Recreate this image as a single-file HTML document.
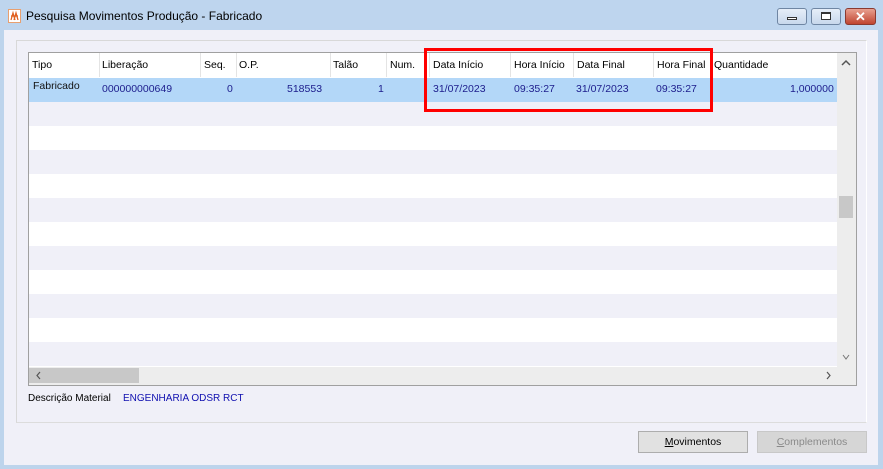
<!DOCTYPE html><html><head><style>
*{margin:0;padding:0;box-sizing:border-box}
body{width:883px;height:469px;overflow:hidden;background:#bdd4ec;font-family:"Liberation Sans",sans-serif;font-size:10.5px;position:relative}
.a{position:absolute}
.t{white-space:nowrap}
</style></head><body>
<div class="a" style="left:0;top:0;width:883px;height:30px;background:#bed5ee"></div>
<svg class="a" style="left:8px;top:9px" width="13" height="14"><rect x="0.5" y="0.5" width="12" height="13" fill="#fff" stroke="#e8a070"/><path d="M3 11 L5 4 L7 11 M6 11 L8 4 L10 11 M3 7h7" stroke="#e06020" stroke-width="1.3" fill="none"/></svg>
<div class="a t" style="left:26px;top:9px;font-size:12px;color:#000">Pesquisa Movimentos Produção - Fabricado</div>
<div class="a" style="left:777px;top:8px;width:30px;height:17px;border:1px solid #6f86a3;border-radius:3px;background:linear-gradient(#e6eef8,#c8d8ec)"></div>
<div class="a" style="left:787px;top:17px;width:10px;height:3px;border:1px solid #333;background:#fff"></div>
<div class="a" style="left:811px;top:8px;width:30px;height:17px;border:1px solid #6f86a3;border-radius:3px;background:linear-gradient(#e6eef8,#c8d8ec)"></div>
<div class="a" style="left:821px;top:12px;width:10px;height:8px;border:1px solid #333;border-top-width:2px;background:#fff"></div>
<div class="a" style="left:845px;top:8px;width:31px;height:17px;border:1px solid #8a3a30;border-radius:3px;background:linear-gradient(#e8a090,#c04530);color:#fff;font-weight:bold;font-size:13px;text-align:center;line-height:15px">✕</div>
<div class="a" style="left:4px;top:30px;width:874px;height:435px;background:#f0f0f8"></div>
<div class="a" style="left:16px;top:40px;width:851px;height:383px;border:1px solid #d8d8d8;border-right-color:#fff;border-bottom-color:#dcdcdc"></div>
<div class="a" style="left:28px;top:52px;width:829px;height:334px;border:1px solid #a0a0a0;background:#fff;overflow:hidden">
 <div class="a" style="left:0;top:1px;width:808px;height:24px;background:#fff"></div>
 <div class="a" style="left:0;top:25px;width:808px;height:24px;background:#b3d7f8"></div>
 <div class="a" style="left:0;top:49px;width:808px;height:24px;background:#f0f0f8"></div>
 <div class="a" style="left:0;top:97px;width:808px;height:24px;background:#f0f0f8"></div>
 <div class="a" style="left:0;top:145px;width:808px;height:24px;background:#f0f0f8"></div>
 <div class="a" style="left:0;top:193px;width:808px;height:24px;background:#f0f0f8"></div>
 <div class="a" style="left:0;top:241px;width:808px;height:24px;background:#f0f0f8"></div>
 <div class="a" style="left:0;top:289px;width:808px;height:24px;background:#f0f0f8"></div>
 <div class="a" style="left:808px;top:0;width:19px;height:314px;background:#ededed"></div>
 <svg class="a" style="left:812px;top:6px" width="10" height="8"><path d="M1 6 L5 2 L9 6" stroke="#555" stroke-width="1.5" fill="none"/></svg>
 <svg class="a" style="left:812px;top:300px" width="10" height="8"><path d="M2 2 L5 6 L8 2" stroke="#777" stroke-width="1" fill="none"/></svg>
 <div class="a" style="left:810px;top:143px;width:14px;height:22px;background:#c8c8c8"></div>
 <div class="a" style="left:0;top:314px;width:827px;height:18px;background:#ededed"></div>
 <div class="a" style="left:0;top:315px;width:110px;height:15px;background:#c8c8c8"></div>
 <svg class="a" style="left:7px;top:318px" width="6" height="9"><path d="M4 1 L1 4.5 L4 8" stroke="#555" stroke-width="1.2" fill="none"/></svg>
 <svg class="a" style="left:797px;top:318px" width="6" height="9"><path d="M1 1 L4 4.5 L1 8" stroke="#555" stroke-width="1.2" fill="none"/></svg>
</div>
<div class="a" style="left:28px;top:53px;width:808px;height:24px;color:#000">
 <span class="a t" style="left:4px;top:6px">Tipo</span>
 <span class="a t" style="left:74px;top:6px">Liberação</span>
 <span class="a t" style="left:176px;top:6px">Seq.</span>
 <span class="a t" style="left:211px;top:6px">O.P.</span>
 <span class="a t" style="left:305px;top:6px">Talão</span>
 <span class="a t" style="left:362px;top:6px">Num.</span>
 <span class="a t" style="left:405px;top:6px">Data Início</span>
 <span class="a t" style="left:486px;top:6px">Hora Início</span>
 <span class="a t" style="left:549px;top:6px">Data Final</span>
 <span class="a t" style="left:629px;top:6px">Hora Final</span>
 <span class="a t" style="left:686px;top:6px">Quantidade</span>
 <span class="a" style="left:71px;top:0;width:1px;height:24px;background:#e4e4e4"></span>
 <span class="a" style="left:172px;top:0;width:1px;height:24px;background:#e4e4e4"></span>
 <span class="a" style="left:208px;top:0;width:1px;height:24px;background:#e4e4e4"></span>
 <span class="a" style="left:302px;top:0;width:1px;height:24px;background:#e4e4e4"></span>
 <span class="a" style="left:358px;top:0;width:1px;height:24px;background:#e4e4e4"></span>
 <span class="a" style="left:401px;top:0;width:1px;height:24px;background:#e4e4e4"></span>
 <span class="a" style="left:482px;top:0;width:1px;height:24px;background:#e4e4e4"></span>
 <span class="a" style="left:545px;top:0;width:1px;height:24px;background:#e4e4e4"></span>
 <span class="a" style="left:625px;top:0;width:1px;height:24px;background:#e4e4e4"></span>
 <span class="a" style="left:683px;top:0;width:1px;height:24px;background:#e4e4e4"></span>
</div>
<div class="a" style="left:28px;top:78px;width:808px;height:24px;color:#1c1c8c">
 <span class="a t" style="left:5px;top:2px;color:#111">Fabricado</span>
 <span class="a t" style="left:74px;top:5px">000000000649</span>
 <span class="a t" style="left:199px;top:5px">0</span>
 <span class="a t" style="left:259px;top:5px">518553</span>
 <span class="a t" style="left:350px;top:5px">1</span>
 <span class="a t" style="left:405px;top:5px">31/07/2023</span>
 <span class="a t" style="left:486px;top:5px">09:35:27</span>
 <span class="a t" style="left:548px;top:5px">31/07/2023</span>
 <span class="a t" style="left:628px;top:5px">09:35:27</span>
 <span class="a t" style="left:762px;top:5px">1,000000</span>
</div>
<div class="a" style="left:424px;top:48px;width:289px;height:64px;border:3px solid #f00"></div>
<div class="a t" style="left:28px;top:393px;color:#000;font-size:10px">Descrição Material</div>
<div class="a t" style="left:123px;top:393px;color:#1010b0;font-size:10px">ENGENHARIA ODSR RCT</div>
<div class="a" style="left:638px;top:431px;width:110px;height:22px;border:1px solid #adadad;background:#e1e1e1;text-align:center;line-height:20px;color:#000"><u>M</u>ovimentos</div>
<div class="a" style="left:757px;top:431px;width:110px;height:22px;border:1px solid #c8c8c8;background:#d6d6d6;text-align:center;line-height:20px;color:#8a8a8a"><u>C</u>omplementos</div>
</body></html>
